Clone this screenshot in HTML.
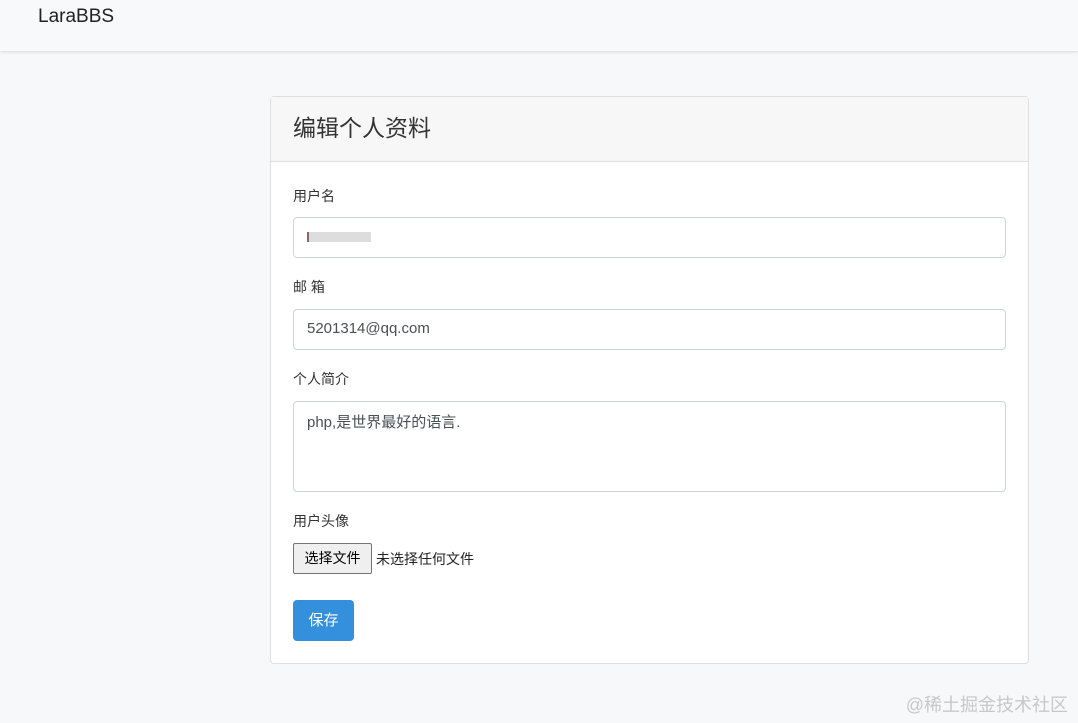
<!DOCTYPE html>
<html><head><meta charset="utf-8"><style>
*{box-sizing:border-box;margin:0;padding:0}
body{width:1078px;height:723px;background:#f7f8fa;font-family:"Liberation Sans","Noto Sans CJK SC",sans-serif;color:#212529;position:relative;overflow:hidden}
.nav{position:absolute;left:0;top:0;width:1078px;height:51px;background:#f8f9fa;box-shadow:0 1px 3px rgba(0,0,0,.12)}
.brand{position:absolute;left:38px;top:6px;font-size:19px;color:#222}
.card{position:absolute;left:270px;top:96px;width:759px;height:568px;background:#fff;border:1px solid #dfdfdf;border-radius:4px}
.hd{height:65px;background:#f7f7f7;border-bottom:1px solid #e0e0e0;padding:12px 0 0 22px;font-size:23px;color:#333}
.lbl{position:absolute;left:22px;font-size:14px;color:#333}
.inp{position:absolute;left:22px;width:713px;height:41px;border:1px solid #ced4da;border-radius:4px;font-size:15px;color:#495057;padding:10px 13px}
.btn{position:absolute;left:22px;top:503px;width:61px;height:41px;background:#3490dc;border-radius:4px;color:#fff;font-size:15px;text-align:center;line-height:41px}
.file{position:absolute;left:22px;top:446px;width:79px;height:31px;background:#efefef;border:1px solid #767676;border-radius:2px;font-size:14px;text-align:center;line-height:29px;color:#000}
.ft{position:absolute;left:105px;top:452px;font-size:14px;color:#222}
.wm{position:absolute;right:10px;bottom:6px;font-size:18px;color:#c8c8c8}
</style></head><body>
<div class="nav"><div class="brand">LaraBBS</div></div>
<div class="card">
<div class="hd">编辑个人资料</div>
<div class="lbl" style="top:89px">用户名</div>
<div class="inp" style="top:120px"><span style="display:inline-block;width:64px;height:10px;background:#ddd;margin-top:4px;border-left:2px solid #866"></span></div>
<div class="lbl" style="top:180px">邮 箱</div>
<div class="inp" style="top:212px">5201314@qq.com</div>
<div class="lbl" style="top:272px">个人简介</div>
<div class="inp" style="top:304px;height:91px;padding-top:9px">php,是世界最好的语言.</div>
<div class="lbl" style="top:414px">用户头像</div>
<div class="file">选择文件</div><div class="ft">未选择任何文件</div>
<div class="btn">保存</div>
</div>
<div class="wm">@稀土掘金技术社区</div>
</body></html>
